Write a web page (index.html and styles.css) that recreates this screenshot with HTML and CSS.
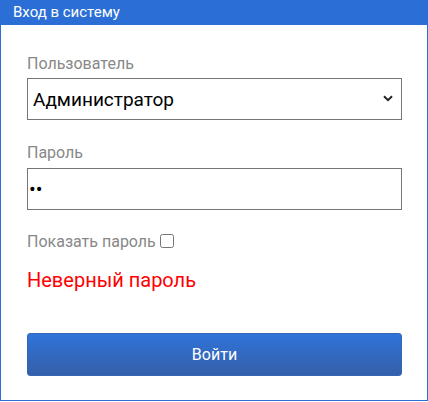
FILE: index.html
```html
<!DOCTYPE html>
<html lang="ru">
<head>
<meta charset="utf-8">
<title>Вход в систему</title>
<link rel="stylesheet" href="styles.css">
</head>
<body>
<div class="panel">
  <div class="panel-head">Вход в систему</div>
  <form class="panel-body">
    <label class="field-label" for="user">Пользователь</label>
    <div class="select-wrap">
      <select id="user" class="control select">
        <option>Администратор</option>
      </select>
      <svg class="chevron" width="10" height="7" viewBox="0 0 10 7"><path d="M1 1.2 L5 5.2 L9 1.2" fill="none" stroke="#222" stroke-width="2"/></svg>
    </div>
    <label class="field-label gap" for="pass">Пароль</label>
    <input id="pass" class="control input" type="password" value="12">
    <label class="show-pass">Показать пароль <input type="checkbox" class="check"></label>
    <div class="error">Неверный пароль</div>
    <button type="button" class="btn">Войти</button>
  </form>
</div>
</body>
</html>
```
FILE: styles.css
```css
* { box-sizing: border-box; }
html, body { margin: 0; padding: 0; background: #fff; }
body { font-family: Roboto, "Noto Sans", sans-serif; }

.panel {
  width: 428px;
  height: 401px;
  border: 1px solid #2b6fd6;
  border-top: none;
  display: flex;
  flex-direction: column;
}
.panel-head {
  height: 25px;
  background: #2b6fd6;
  color: #fff;
  font-size: 15px;
  line-height: 25px;
  padding-left: 13px;
  margin: 0 -1px;
  flex: none;
}
.panel-body {
  display: flex;
  flex-direction: column;
  padding: 29px 25px 0 26px;
  margin: 0;
}
.field-label {
  font-size: 16px;
  line-height: 19px;
  color: #888;
  height: 19px;
  flex: none;
}
.field-label.gap { margin-top: 23px; }
.select-wrap {
  position: relative;
  margin-top: 5px;
  flex: none;
}
.control {
  display: block;
  width: 375px;
  height: 42px;
  flex: none;
  border: 1px solid #767676;
  border-radius: 0;
  background: #fff;
  margin: 0;
  font-family: Roboto, "Noto Sans", sans-serif;
  outline: none;
}
.select {
  appearance: none;
  -webkit-appearance: none;
  font-size: 19px;
  color: #000;
  padding: 0 0 0 5px;
}
.chevron {
  position: absolute;
  right: 9px;
  top: 17px;
}
.input {
  margin-top: 6px;
  font-size: 20px;
  padding: 0 1px;
  color: #000;
}
.show-pass {
  margin-top: 22px;
  font-size: 16px;
  line-height: 19px;
  color: #888;
  display: flex;
  align-items: center;
  flex: none;
}
.check {
  width: 14px;
  height: 14px;
  margin: 0 0 2px 4px;
}
.error {
  margin-top: 17px;
  font-size: 20px;
  line-height: 24px;
  color: #f00;
  flex: none;
}
.btn {
  margin-top: 41px;
  width: 375px;
  height: 43px;
  flex: none;
  border: 1px solid #3566b5;
  border-radius: 3px;
  background: linear-gradient(#2f74d9, #355fa9);
  color: #fff;
  font-family: Roboto, "Noto Sans", sans-serif;
  font-size: 16px;
  cursor: pointer;
}
```
